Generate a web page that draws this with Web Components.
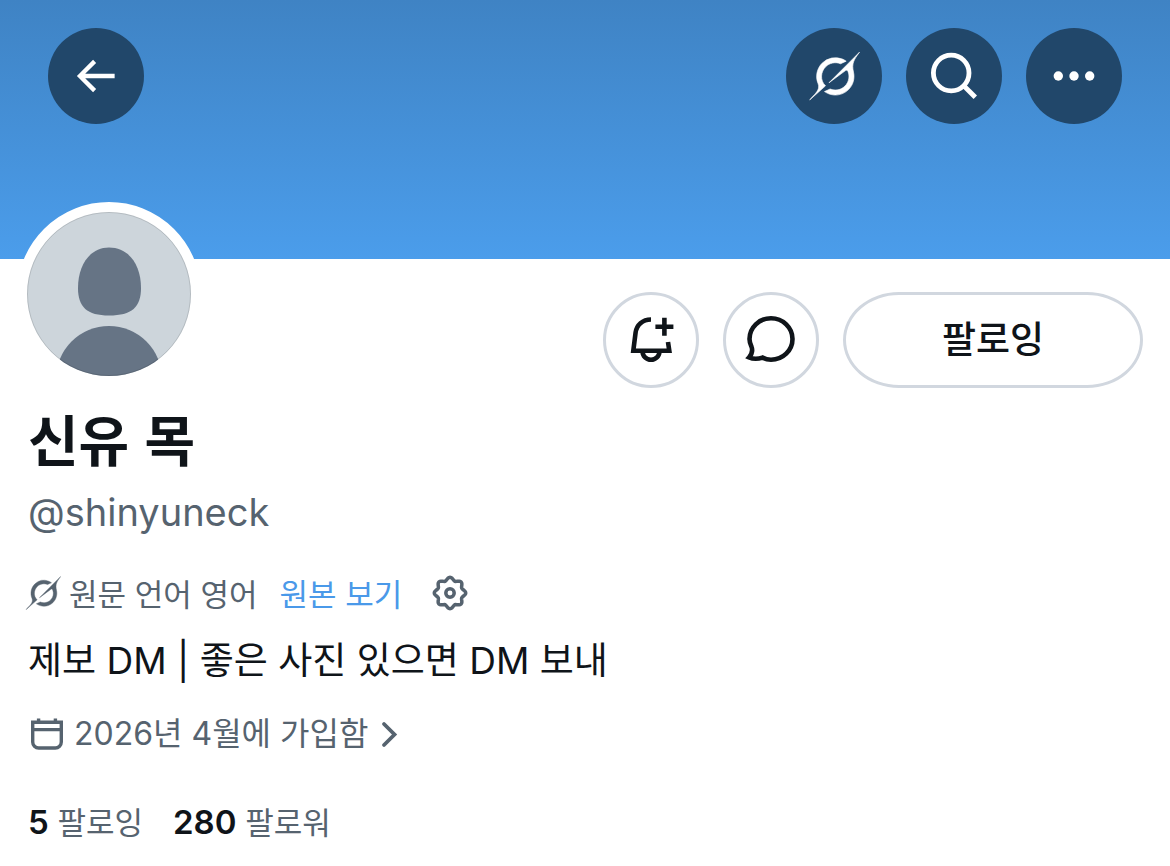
<!DOCTYPE html>
<html lang="ko">
<head>
<meta charset="utf-8">
<meta name="viewport" content="width=device-width, initial-scale=1">
<title>신유 목 (@shinyuneck)</title>
<style>
body {
  margin: 0;
  background: #fff;
  color: #0f1419;
  font-family: Inter, "Noto Sans CJK KR", sans-serif;
  --muted: #56636f;
  --link: #4a99e9;
  --line: #d1d7df;
}
</style>
</head>
<body>
<profile-page>
  <profile-banner slot="banner">
    <icon-button slot="start" icon="back" label="뒤로"></icon-button>
    <icon-button icon="grok" label="Grok"></icon-button>
    <icon-button icon="search" label="검색"></icon-button>
    <icon-button icon="more" label="더 보기"></icon-button>
  </profile-banner>
  <profile-avatar slot="avatar"></profile-avatar>
  <icon-button slot="actions" kind="outline" icon="bell" label="알림"></icon-button>
  <icon-button slot="actions" kind="outline" icon="chat" label="쪽지"></icon-button>
  <follow-button slot="actions">팔로잉</follow-button>
  <profile-name handle="@shinyuneck">신유 목</profile-name>
  <translate-row action="원본 보기">원문 언어 영어</translate-row>
  <profile-bio>제보 DM | 좋은 사진 있으면 DM 보내</profile-bio>
  <joined-date>2026년 4월에 가입함</joined-date>
  <follow-stats>
    <stat-link count="5">팔로잉</stat-link>
    <stat-link count="280">팔로워</stat-link>
  </follow-stats>
</profile-page>

<script>
// wavy outline of the settings gear, eight bumps
function gearPath(cx, cy) {
    const points = [];
    for (let i = 0; i < 96; i++) {
        const t = i / 96 * Math.PI * 2;
        const r = 14.2 + 1.5 * Math.cos(t * 8);
        points.push((cx + r * Math.cos(t)).toFixed(2) + ' ' + (cy + r * Math.sin(t)).toFixed(2));
    }
    return 'M' + points.join('L') + 'Z';
}

const icons = {
    back: `<svg viewBox="0.4 0 24 24" fill="currentColor"><path d="M7.414 13l5.043 5.04-1.414 1.42L3.586 12l7.457-7.46 1.414 1.42L7.414 11H21v2H7.414z"/></svg>`,
    grok: `<svg viewBox="-0.8 -0.3 25 24.6" fill="currentColor" stroke="currentColor" stroke-width=".3"><path d="M9.27 15.29l7.978-5.897c.391-.29.95-.177 1.137.272.98 2.369.542 5.215-1.41 7.169-1.951 1.954-4.667 2.382-7.149 1.406l-2.711 1.257c3.889 2.661 8.611 2.003 11.562-.953 2.341-2.344 3.066-5.539 2.388-8.42l.006.007c-.983-4.232.242-5.924 2.75-9.383.06-.082.12-.164.179-.248l-3.301 3.305v-.01L9.267 15.292M7.623 16.723c-2.792-2.67-2.31-6.801.071-9.184 1.761-1.763 4.647-2.483 7.166-1.425l2.705-1.25a7.808 7.808 0 00-1.829-1A8.975 8.975 0 005.984 5.83c-2.533 2.536-3.33 6.436-1.962 9.764 1.022 2.487-.653 4.246-2.34 6.022-.599.63-1.199 1.259-1.682 1.925l7.62-6.815"/></svg>`,
    search: `<svg viewBox="0 0 52 52" fill="none" stroke="currentColor" stroke-width="4.8"><circle cx="23.2" cy="23" r="17.8"/><path d="M35.5 35.5L47.3 47.3"/></svg>`,
    more: `<svg viewBox="0 0 52 52" fill="currentColor"><circle cx="10.3" cy="26" r="4.7"/><circle cx="26" cy="26" r="4.7"/><circle cx="41.7" cy="26" r="4.7"/></svg>`,
    bell: `<svg viewBox="0 0 52 52" fill="none" stroke="currentColor" stroke-width="4.6"><path d="M26 5.5C17.5 5.5 11.6 11 10.6 18.5L8.3 36.8H44.3L43 28M17.6 37.4a8.4 8.4 0 0 0 16.8 0M39.4 3.7v18M30.4 12.7h18"/></svg>`,
    chat: `<svg viewBox="0 0 52 52" fill="none" stroke="currentColor" stroke-width="4.6"><path d="M17.5 43.6C20 45 23 45.8 26 45.8A21.5 20.8 0 0 0 26 4.2A21.5 20.8 0 0 0 4.5 25C4.5 28 5.4 30 6.4 32.5C7.8 36 7 40 4 43.4C9 45.6 14 44.8 17.5 43.6Z"/></svg>`,
    gear: `<svg viewBox="0 0 36 36" fill="none" stroke="currentColor" stroke-width="3.5"><path d="${gearPath(18, 18)}"/><circle cx="18" cy="18" r="4.2"/></svg>`,
    calendar: `<svg viewBox="0 0 36 36" fill="none" stroke="currentColor" stroke-width="3.4"><path d="M4.7 6.2H33.3V26a6 6 0 0 1-6 6H10.7a6 6 0 0 1-6-6ZM4.7 13.6H33.3M10.6 2.4v4M27.4 2.4v4"/></svg>`,
    chevron: `<svg viewBox="0 0 20 36" fill="none" stroke="currentColor" stroke-width="3.8" stroke-linecap="round"><path d="M6 8L16.5 18.5L6 29"/></svg>`
};

class IconButton extends HTMLElement {
    connectedCallback() {
        this.attachShadow({mode: 'open'});
        this.shadowRoot.innerHTML = `
      <style>
:host {
  display: block;
}

button {
  display: grid;
  place-items: center;
  box-sizing: border-box;
  width: 96px;
  height: 96px;
  padding: 0;
  border: none;
  border-radius: 50%;
  background: #21476a;
  color: #fff;
  cursor: pointer;
}

:host([kind="outline"]) button {
  border: 3px solid var(--line);
  background: #fff;
  color: #0f1419;
}

svg {
  width: 52px;
  height: 52px;
}
      </style>
      <button type="button" aria-label="${this.getAttribute('label')}">${icons[this.getAttribute('icon')]}</button>
    `;
    }
}

class FollowButton extends HTMLElement {
    connectedCallback() {
        this.attachShadow({mode: 'open'});
        this.shadowRoot.innerHTML = `
      <style>
:host {
  display: block;
}

button {
  box-sizing: border-box;
  width: 300px;
  height: 96px;
  border: 3px solid var(--line);
  border-radius: 56px / 48px;
  background: #fff;
  color: #0f1419;
  font: 500 37px/48px Inter, "Noto Sans CJK KR", sans-serif;
  cursor: pointer;
}
      </style>
      <button type="button"><slot></slot></button>
    `;
    }
}

class ProfileBanner extends HTMLElement {
    connectedCallback() {
        this.attachShadow({mode: 'open'});
        this.shadowRoot.innerHTML = `
      <style>
:host {
  display: block;
  min-height: 203px;
  padding: 28px 48px;
  background: linear-gradient(#3f83c4, #4b9deb);
}

nav {
  display: flex;
  justify-content: space-between;
}

.end {
  display: flex;
  gap: 24px;
}
      </style>
      <nav>
        <slot name="start"></slot>
        <div class="end"><slot></slot></div>
      </nav>
    `;
    }
}

class ProfileAvatar extends HTMLElement {
    connectedCallback() {
        this.attachShadow({mode: 'open'});
        this.shadowRoot.innerHTML = `
      <style>
:host {
  display: block;
  width: 164px;
  height: 164px;
  border: 10px solid #fff;
  border-radius: 50%;
  background: #fff;
}

svg {
  display: block;
  width: 100%;
  height: 100%;
}
      </style>
      <svg viewBox="0 0 164 164" role="img" aria-label="프로필 사진">
        <clipPath id="disc"><circle cx="82" cy="82" r="82"/></clipPath>
        <g clip-path="url(#disc)">
          <rect width="164" height="164" fill="#cdd5db"/>
          <path fill="#667485" d="M82 35.5C102 35.5 114 53 114 76C114 95 105 103.5 82 103.5C60 103.5 51 95 51 76C51 53 63 35.5 82 35.5Z"/>
          <circle cx="82" cy="167" r="53" fill="#667485"/>
        </g>
        <circle cx="82" cy="82" r="81.5" fill="none" stroke="#000" stroke-opacity=".12"/>
      </svg>
    `;
    }
}

class ProfileName extends HTMLElement {
    connectedCallback() {
        this.attachShadow({mode: 'open'});
        this.shadowRoot.innerHTML = `
      <style>
:host {
  display: block;
}

h1 {
  margin: 0;
  font: 700 55px/72px "Noto Sans CJK KR", sans-serif;
}

p {
  margin: 15px 0 0;
  font-size: 38px;
  line-height: 48px;
  color: var(--muted);
}
      </style>
      <h1><slot></slot></h1>
      <p>${this.getAttribute('handle')}</p>
    `;
    }
}

class TranslateRow extends HTMLElement {
    connectedCallback() {
        this.attachShadow({mode: 'open'});
        this.shadowRoot.innerHTML = `
      <style>
:host {
  display: flex;
  align-items: center;
  margin: 33px 0 0 -3px;
  font: 31px/48px "Noto Sans CJK KR", sans-serif;
  color: var(--muted);
}

svg {
  display: block;
  width: 36px;
  height: 36px;
}

span {
  margin-left: 8px;
}

a {
  margin-left: 22px;
  color: var(--link);
  text-decoration: none;
}

button {
  margin-left: 30px;
  padding: 0;
  border: none;
  background: none;
  color: inherit;
  cursor: pointer;
}
      </style>
      ${icons.grok}
      <span><slot></slot></span>
      <a href="#original">${this.getAttribute('action')}</a>
      <button type="button" aria-label="번역 설정">${icons.gear}</button>
    `;
    }
}

class ProfileBio extends HTMLElement {
    connectedCallback() {
        this.attachShadow({mode: 'open'});
        this.shadowRoot.innerHTML = `
      <style>
:host {
  display: block;
  margin-top: 20px;
  font-size: 37px;
  line-height: 48px;
}
      </style>
      <slot></slot>
    `;
    }
}

class JoinedDate extends HTMLElement {
    connectedCallback() {
        this.attachShadow({mode: 'open'});
        this.shadowRoot.innerHTML = `
      <style>
:host {
  display: block;
  margin-top: 25px;
  font-size: 32px;
  line-height: 48px;
}

a {
  display: inline-flex;
  align-items: center;
  gap: 10px;
  color: var(--muted);
  text-decoration: none;
}

svg {
  height: 36px;
}
      </style>
      <a href="#about">${icons.calendar}<slot></slot>${icons.chevron}</a>
    `;
    }
}

class FollowStats extends HTMLElement {
    connectedCallback() {
        this.attachShadow({mode: 'open'});
        this.shadowRoot.innerHTML = `
      <style>
:host {
  display: flex;
  gap: 30px;
  margin-top: 33px;
}
      </style>
      <slot></slot>
    `;
    }
}

class StatLink extends HTMLElement {
    connectedCallback() {
        this.attachShadow({mode: 'open'});
        this.shadowRoot.innerHTML = `
      <style>
:host {
  display: block;
  font-size: 31px;
  line-height: 48px;
}

a {
  color: var(--muted);
  text-decoration: none;
}

b {
  font-size: 33px;
  font-weight: 600;
  color: #0f1419;
}
      </style>
      <a href="#follows"><b>${this.getAttribute('count')}</b> <slot></slot></a>
    `;
    }
}

class ProfilePage extends HTMLElement {
    connectedCallback() {
        this.attachShadow({mode: 'open'});
        this.shadowRoot.innerHTML = `
      <style>
:host {
  display: block;
}

.head {
  display: flex;
  justify-content: space-between;
  align-items: flex-start;
  padding: 0 27px 0 17px;
}

::slotted(profile-avatar) {
  margin-top: -57px;
}

.actions {
  display: flex;
  gap: 24px;
  margin-top: 33px;
}

main {
  padding: 13px 28px;
}
      </style>
      <slot name="banner"></slot>
      <div class="head">
        <slot name="avatar"></slot>
        <div class="actions"><slot name="actions"></slot></div>
      </div>
      <main><slot></slot></main>
    `;
    }
}

customElements.define('icon-button', IconButton);
customElements.define('follow-button', FollowButton);
customElements.define('profile-banner', ProfileBanner);
customElements.define('profile-avatar', ProfileAvatar);
customElements.define('profile-name', ProfileName);
customElements.define('translate-row', TranslateRow);
customElements.define('profile-bio', ProfileBio);
customElements.define('joined-date', JoinedDate);
customElements.define('follow-stats', FollowStats);
customElements.define('stat-link', StatLink);
customElements.define('profile-page', ProfilePage);
</script>
</body>
</html>
